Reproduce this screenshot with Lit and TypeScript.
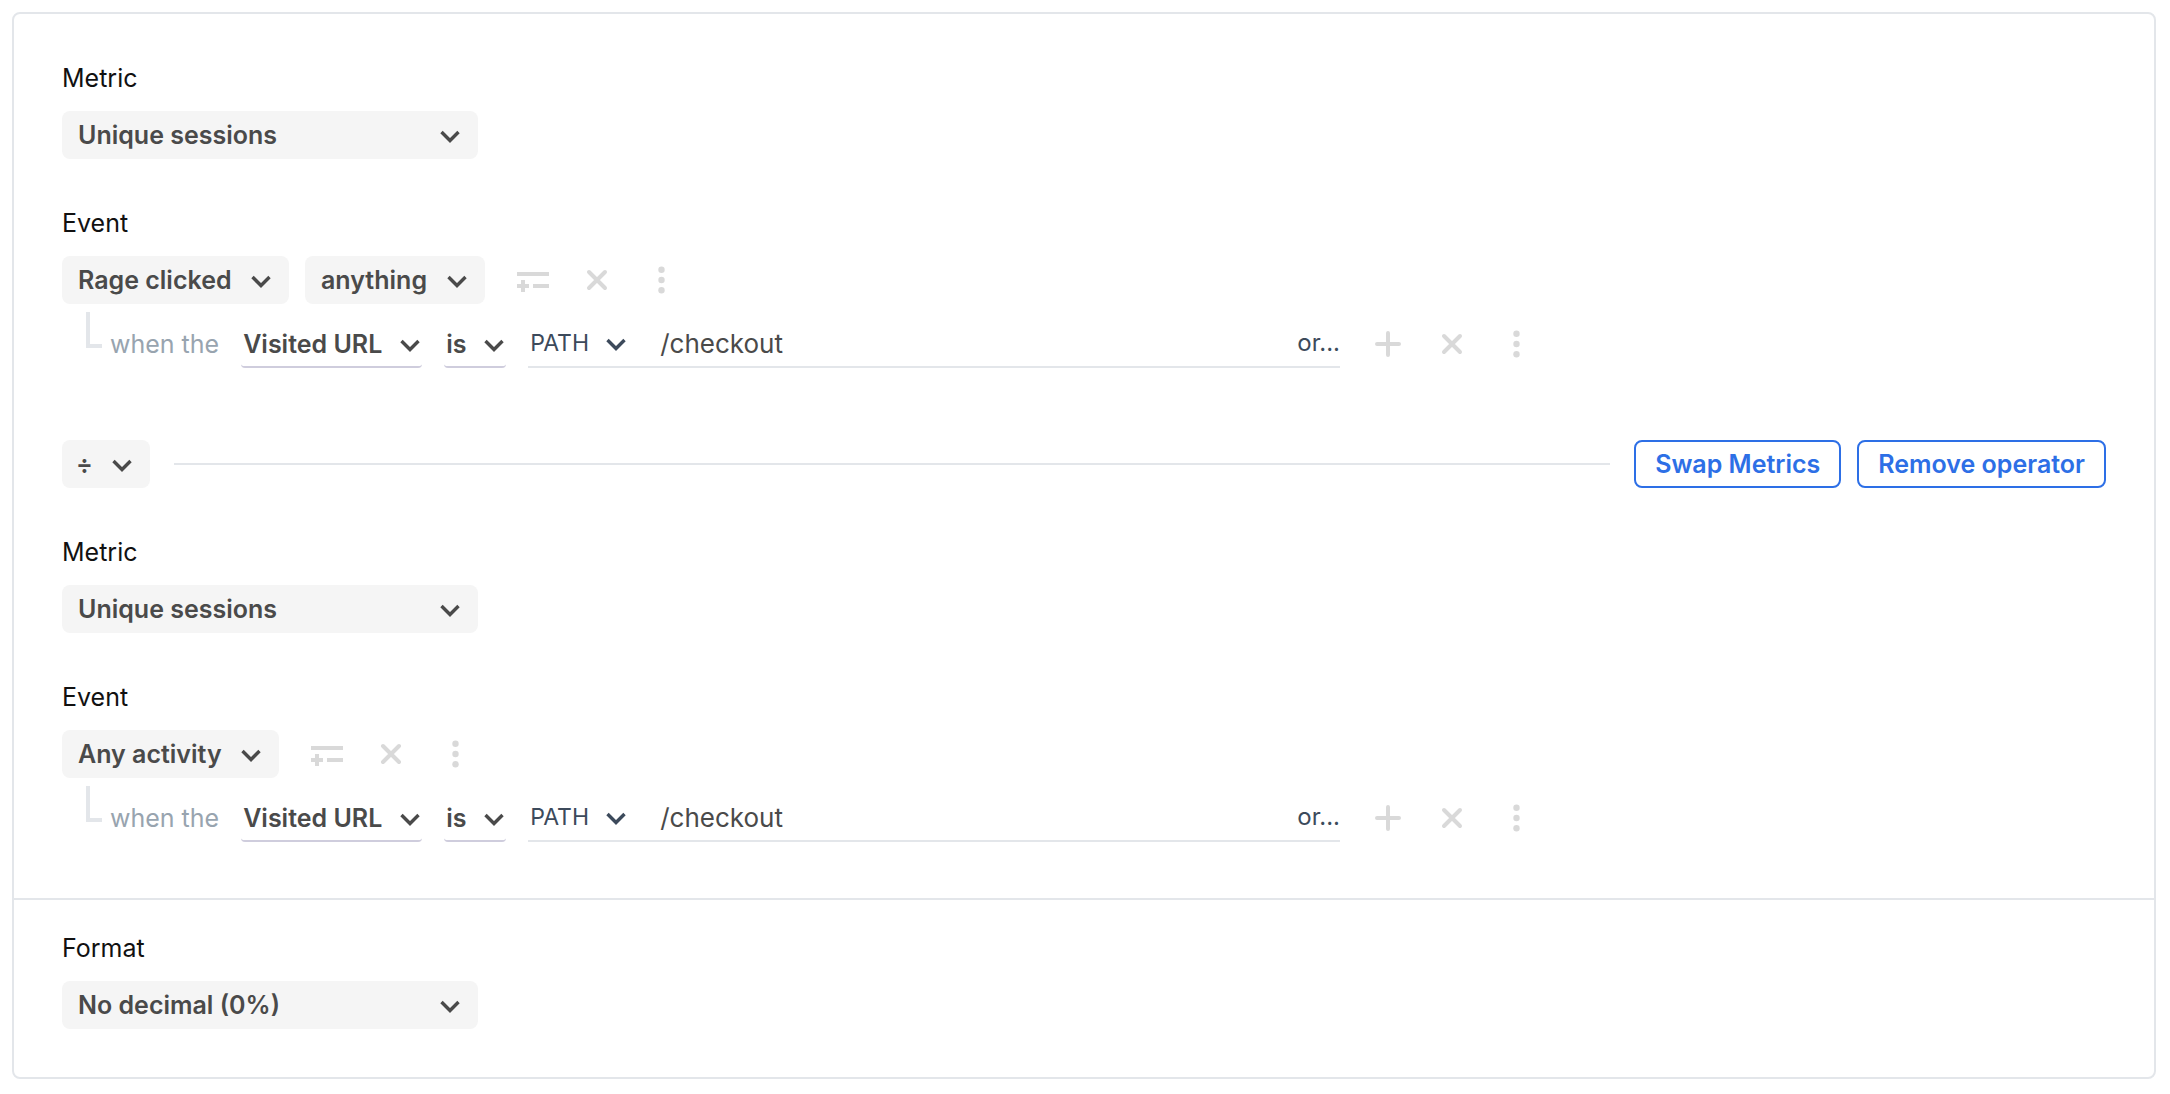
import { LitElement, html, css, svg, nothing } from "lit";
import { customElement, property } from "lit/decorators.js";

const shared = css`
  * {
    box-sizing: border-box;
  }
  select,
  input,
  button {
    font: inherit;
    color: inherit;
    margin: 0;
    border: 0;
    background: none;
    outline-offset: 2px;
  }
  select,
  button {
    cursor: pointer;
  }
`;

/* A native drop-down with a drawn chevron laid over its right end. */
@customElement("drop-down")
export class DropDown extends LitElement {
  @property() value = "";
  @property() label = "";
  @property() kind: "filled" | "wide" | "operator" | "line" | "path" = "filled";

  static styles = [
    shared,
    css`
      :host {
        display: inline-block;
      }
      .box {
        display: inline-grid;
        align-items: center;
        color: #4a4a4a;
        font-weight: 600;
      }
      .select,
      .chevron {
        grid-area: 1 / 1;
      }
      .select {
        appearance: none;
        width: 100%;
        height: 48px;
        padding: 0 57px 0 16px;
        border-radius: 8px;
        background: #f5f5f5;
      }
      .chevron {
        justify-self: end;
        width: 20px;
        height: 14px;
        margin-right: 18px;
        margin-top: 4px;
        pointer-events: none;
      }
      .wide {
        width: 416px;
      }
      .operator .select {
        padding-left: 14px;
      }
      .line .select,
      .path .select {
        padding: 2px 39px 0 2px;
        background: none;
      }
      .line .select {
        border-bottom: 2px solid #cfcddd;
        border-radius: 4px;
      }
      .line .chevron,
      .path .chevron {
        margin-right: 2px;
      }
      .path {
        color: #3c4a5b;
        font-weight: 400;
        font-size: 23px;
      }
      .path .select {
        height: 46px;
        padding-top: 0;
      }
    `,
  ];

  render() {
    return html`<span class="box ${this.kind}">
      <select class="select" aria-label=${this.label}>
        <option>${this.value}</option>
      </select>
      <svg class="chevron" viewBox="0 0 20 14" aria-hidden="true">
        <path d="M1.500 2 L10 10.500 L18.500 2" fill="none" stroke="currentColor" stroke-width="3.4" />
      </svg>
    </span>`;
  }
}

const glyphs = {
  filter: svg`<path d="M8 16H40V20H8ZM24 28H40V32H24ZM12 24H16V28H20V32H16V36H12V32H8V28H12Z" fill="currentColor"/>`,
  close: svg`<path d="M16 16 32 32M32 16 16 32" stroke="currentColor" stroke-width="4" stroke-linecap="round"/>`,
  add: svg`<path d="M24 13V35M13 24H35" stroke="currentColor" stroke-width="4" stroke-linecap="round"/>`,
  more: svg`<g fill="currentColor"><circle cx="24.500" cy="13.700" r="3.200"/><circle cx="24.500" cy="24" r="3.200"/><circle cx="24.500" cy="34.300" r="3.200"/></g>`,
};

@customElement("icon-actions")
export class IconActions extends LitElement {
  @property() first: "filter" | "add" = "filter";

  static styles = [
    shared,
    css`
      :host {
        display: flex;
        gap: 16px;
        margin-left: 24px;
        color: #d9d9d9;
      }
      .action {
        display: block;
        width: 48px;
        height: 48px;
        padding: 0;
      }
      .glyph {
        display: block;
        width: 48px;
        height: 48px;
      }
    `,
  ];

  private action(name: keyof typeof glyphs, label: string) {
    return html`<button class="action" type="button" aria-label=${label}>
      <svg class="glyph" viewBox="0 0 48 48" fill="none" aria-hidden="true">${glyphs[name]}</svg>
    </button>`;
  }

  render() {
    return html`${this.action(this.first, this.first === "add" ? "Add" : "Filter")}
    ${this.action("close", "Remove")}${this.action("more", "More")}`;
  }
}

@customElement("metric-block")
export class MetricBlock extends LitElement {
  @property() metric = "";
  @property() event = "";
  @property() target = "";

  static styles = [
    shared,
    css`
      :host {
        display: block;
      }
      .label {
        line-height: 33px;
        margin-bottom: 16px;
        color: #111;
      }
      .row {
        display: flex;
        align-items: center;
      }
      .metric {
        margin-bottom: 48px;
      }
      .event {
        margin-bottom: 16px;
      }
      .pills {
        display: flex;
        gap: 16px;
      }
      .elbow {
        align-self: flex-start;
        width: 16px;
        height: 36px;
        margin: -8px 8px 0 24px;
        border-left: 4px solid #e3e6ea;
        border-bottom: 4px solid #e3e6ea;
      }
      .clause {
        display: flex;
        align-items: center;
        gap: 22px;
        flex: 0 1 1230px;
        min-width: 0;
      }
      .lead {
        color: #98a4af;
        white-space: nowrap;
      }
      .field {
        display: flex;
        align-items: center;
        flex: 1;
        min-width: 0;
        height: 48px;
        border-bottom: 2px solid #e3e6ea;
      }
      .value {
        flex: 1;
        min-width: 0;
        height: 46px;
        margin-left: 32px;
        padding: 0;
        color: #4a4a4a;
        font-size: 26px;
      }
      .or {
        padding: 0;
        color: #3c4a5b;
        font-size: 24px;
      }
    `,
  ];

  render() {
    return html`
      <div class="label">Metric</div>
      <div class="row metric">
        <drop-down kind="wide" label="Metric" .value=${this.metric}></drop-down>
      </div>
      <div class="label">Event</div>
      <div class="row event">
        <div class="pills">
          <drop-down label="Event" .value=${this.event}></drop-down>
          ${this.target
            ? html`<drop-down label="Target" .value=${this.target}></drop-down>`
            : nothing}
        </div>
        <icon-actions first="filter"></icon-actions>
      </div>
      <div class="row">
        <span class="elbow"></span>
        <div class="clause">
          <span class="lead">when the</span>
          <drop-down kind="line" label="Property" value="Visited URL"></drop-down>
          <drop-down kind="line" label="Comparison" value="is"></drop-down>
          <div class="field">
            <drop-down kind="path" label="URL part" value="PATH"></drop-down>
            <input class="value" type="text" aria-label="Value" .value=${"/checkout"} />
            <button class="or" type="button">or...</button>
          </div>
        </div>
        <icon-actions first="add"></icon-actions>
      </div>
    `;
  }
}

@customElement("app-root")
export class AppRoot extends LitElement {
  static styles = [
    shared,
    css`
      :host {
        display: block;
        padding: 12px 14px 12px 12px;
        background: #fff;
        font: 400 25px/32px Inter, "Liberation Sans", sans-serif;
      }
      drop-down,
      .card {
        display: block;
      }
      .card {
        border: 2px solid #e3e6ea;
        border-radius: 8px;
      }
      .formula {
        padding: 48px 48px 56px;
      }
      .operator-row {
        display: flex;
        align-items: center;
        gap: 24px;
        margin: 72px 0 48px;
      }
      .rule {
        flex: 1;
        height: 2px;
        margin: 0;
        border: 0;
        background: #e3e6ea;
      }
      .buttons {
        display: flex;
        gap: 16px;
      }
      .outline {
        height: 48px;
        padding: 0 19px;
        border: 2px solid #2d6fe6;
        border-radius: 8px;
        color: #2d6fe6;
        font-weight: 600;
        white-space: nowrap;
      }
      .format {
        padding: 32px 48px 48px;
        border-top: 2px solid #e3e6ea;
      }
      .label {
        line-height: 33px;
        margin-bottom: 16px;
        color: #111;
      }
    `,
  ];

  render() {
    return html`
      <main class="card">
        <section class="formula">
          <metric-block metric="Unique sessions" event="Rage clicked" target="anything"></metric-block>
          <div class="operator-row">
            <drop-down kind="operator" label="Operator" value="÷"></drop-down>
            <hr class="rule" />
            <div class="buttons">
              <button class="outline" type="button">Swap Metrics</button>
              <button class="outline" type="button">Remove operator</button>
            </div>
          </div>
          <metric-block metric="Unique sessions" event="Any activity"></metric-block>
        </section>
        <section class="format">
          <div class="label">Format</div>
          <drop-down kind="wide" label="Format" value="No decimal (0%)"></drop-down>
        </section>
      </main>
    `;
  }
}
